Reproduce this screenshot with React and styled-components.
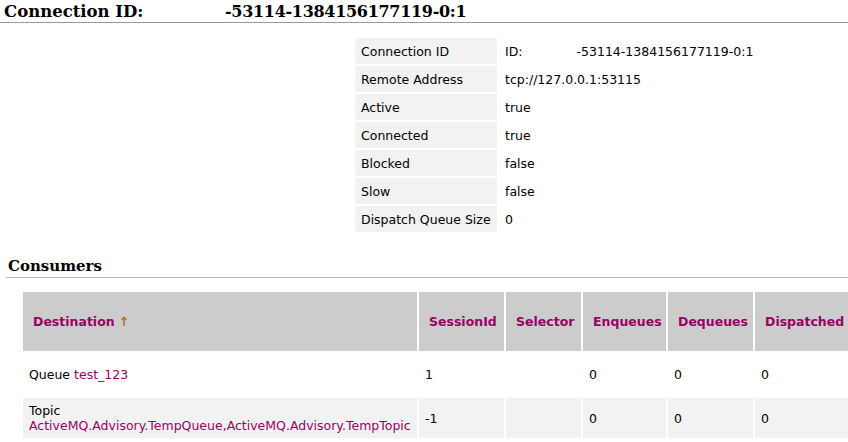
import React from 'react';
import styled, { createGlobalStyle } from 'styled-components';

const Global = createGlobalStyle`
  html, body { margin: 0; padding: 0; background: #fff; overflow: hidden; }
  body { font-family: "DejaVu Sans", Verdana, sans-serif; font-size: 12.5px; color: #000; }
`;

const Page = styled.div`
  width: 848px;
  height: 442px;
  overflow: hidden;
`;

const Title = styled.h2`
  margin: 0;
  padding: 2px 0 0 4px;
  height: 20px;
  display: flex;
  font-family: "DejaVu Serif", Georgia, serif;
  font-weight: bold;
  font-size: 16.5px;
  border-bottom: 1px solid #999;
`;

const TitleLabel = styled.span`
  width: 221px;
`;

const TitleValue = styled.span`
  font-size: 16px;
  letter-spacing: -0.3px;
`;

const InfoTable = styled.table`
  margin: 13px 0 0 353px;
  border-spacing: 2px;
  font-size: 12.5px;
`;

const Label = styled.td`
  background: #f2f2f2;
  height: 26px;
  padding: 0 6px;
  width: 142px;
  white-space: nowrap;
  box-sizing: border-box;
`;

const Value = styled.td`
  height: 26px;
  padding: 0 6px;
  white-space: nowrap;
`;

const Gap = styled.span`
  display: inline-block;
  width: 54px;
`;

const Section = styled.h3`
  margin: 23px 0 0 6px;
  padding: 0 0 2px 2px;
  font-family: "DejaVu Serif", Georgia, serif;
  font-weight: bold;
  font-size: 15px;
  border-bottom: 1px solid #bbb;
`;

const Grid = styled.table`
  margin: 12px 0 0 21px;
  border-spacing: 2px;
  width: 928px;
  font-size: 12.5px;
  table-layout: fixed;
`;

const Head = styled.th`
  background: #ccc;
  height: 59px;
  padding: 0 10px;
  text-align: left;
  color: #990066;
  font-weight: bold;
  white-space: nowrap;
  overflow: hidden;
  box-sizing: border-box;
  width: ${p => p.$w}px;
`;

const Row = styled.tr`
  background: ${p => (p.$alt ? '#f2f2f2' : '#fff')};
`;

const Cell = styled.td`
  height: ${p => p.$h}px;
  padding: 0 6px;
  line-height: 15px;
  vertical-align: middle;
  white-space: nowrap;
`;

const Link = styled.a`
  color: #990066;
  text-decoration: none;
`;

const Arrow = styled.span`
  color: #b0702e;
  font-weight: bold;
  margin-left: 4px;
`;

const info = [
  ['Connection ID', <>ID:<Gap />-53114-1384156177119-0:1</>],
  ['Remote Address', 'tcp://127.0.0.1:53115'],
  ['Active', 'true'],
  ['Connected', 'true'],
  ['Blocked', 'false'],
  ['Slow', 'false'],
  ['Dispatch Queue Size', '0'],
];

const cols = [
  ['SessionId', 85],
  ['Selector', 75],
  ['Enqueues', 83],
  ['Dequeues', 85],
  ['Dispatched', 100],
  ['', 90],
];

export default function App() {
  return (
    <Page>
      <Global />
      <Title>
        <TitleLabel>Connection ID:</TitleLabel>
        <TitleValue>-53114-1384156177119-0:1</TitleValue>
      </Title>

      <InfoTable>
        <tbody>
          {info.map(([k, v]) => (
            <tr key={k}>
              <Label>{k}</Label>
              <Value>{v}</Value>
            </tr>
          ))}
        </tbody>
      </InfoTable>

      <Section>Consumers</Section>

      <Grid>
        <thead>
          <tr>
            <Head $w={394}>Destination<Arrow>↑</Arrow></Head>
            {cols.map(([c, w], i) => (
              <Head key={i} $w={w}>{c}</Head>
            ))}
          </tr>
        </thead>
        <tbody>
          <Row>
            <Cell $h={43}>Queue <Link href="#">test_123</Link></Cell>
            <Cell>1</Cell>
            <Cell></Cell>
            <Cell>0</Cell>
            <Cell>0</Cell>
            <Cell>0</Cell>
            <Cell></Cell>
          </Row>
          <Row $alt>
            <Cell $h={40}>
              Topic<br />
              <Link href="#">ActiveMQ.Advisory.TempQueue,ActiveMQ.Advisory.TempTopic</Link>
            </Cell>
            <Cell>-1</Cell>
            <Cell></Cell>
            <Cell>0</Cell>
            <Cell>0</Cell>
            <Cell>0</Cell>
            <Cell></Cell>
          </Row>
        </tbody>
      </Grid>
    </Page>
  );
}
